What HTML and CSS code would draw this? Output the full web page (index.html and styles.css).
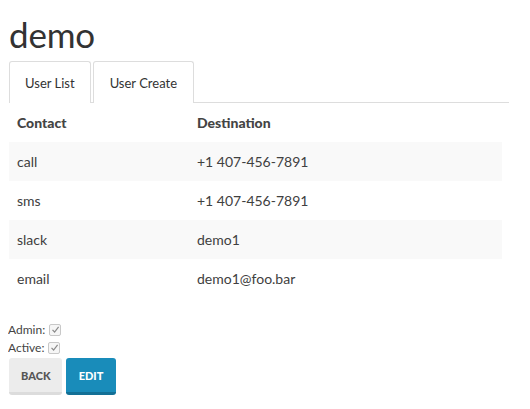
FILE: index.html
```html
<!DOCTYPE html>
<html>
<head>
<meta charset="utf-8">
<link rel="stylesheet" href="styles.css">
</head>
<body>
<h1 class="title">demo</h1>
<div class="tabs">
  <div class="tab">User List</div>
  <div class="tab">User Create</div>
</div>
<table class="contacts">
  <thead>
    <tr><th class="col1">Contact</th><th>Destination</th></tr>
  </thead>
  <tbody>
    <tr class="odd"><td>call</td><td>+1 407-456-7891</td></tr>
    <tr><td>sms</td><td>+1 407-456-7891</td></tr>
    <tr class="odd"><td>slack</td><td>demo1</td></tr>
    <tr><td>email</td><td>demo1@foo.bar</td></tr>
  </tbody>
</table>
<div class="flags">
  <div class="flag">Admin: <span class="check"><svg width="9" height="9" viewBox="0 0 9 9"><path d="M1.5 4.8 L3.6 7 L7.6 1.8" fill="none" stroke="#8a8a8a" stroke-width="1.2"/></svg></span></div>
  <div class="flag">Active: <span class="check"><svg width="9" height="9" viewBox="0 0 9 9"><path d="M1.5 4.8 L3.6 7 L7.6 1.8" fill="none" stroke="#8a8a8a" stroke-width="1.2"/></svg></span></div>
</div>
<div class="actions">
  <button class="btn btn-back">Back</button>
  <button class="btn btn-edit">Edit</button>
</div>
</body>
</html>
```

FILE: styles.css
```css
body {
  margin: 8px;
  font-family: Lato, "Liberation Sans", sans-serif;
  color: #444;
  background: #fff;
}
.title {
  margin: 4px 0 0 1px;
  font-family: Lato, sans-serif;
  font-weight: 400;
  font-size: 35px;
  line-height: 44px;
  color: #333;
  letter-spacing: -0.2px;
}
.tabs {
  display: flex;
  gap: 2px;
  margin: 5px 13px 0 1px;
  border-bottom: 1px solid #ddd;
  height: 41px;
}
.tab {
  display: flex;
  align-items: center;
  padding: 0 15px;
  border: 1px solid #ddd;
  border-bottom: none;
  border-radius: 3px 3px 0 0;
  font-size: 13px;
  color: #333;
  margin-bottom: -1px;
  background: #fff;
}
.tab + .tab { padding: 0 16px; }
.contacts {
  border-collapse: collapse;
  table-layout: fixed;
  margin-left: 1px;
  width: 493px;
  font-size: 14px;
  color: #404040;
}
.contacts th, .contacts td {
  height: 39px;
  padding: 0 8px;
  text-align: left;
}
.contacts th {
  font-weight: 900;
  color: #444;
}
.col1 { width: 164px; }
.contacts tr.odd { background: #f9f9f9; }
.flags {
  margin-top: 24px;
  font-size: 12px;
  color: #444;
}
.flag {
  display: flex;
  align-items: center;
  gap: 2px;
  height: 15px;
  margin-bottom: 3px;
}
.check {
  display: inline-flex;
  align-items: center;
  justify-content: center;
  width: 10px;
  height: 10px;
  border: 1px solid #c8c8c8;
  border-radius: 2px;
  background: #f6f6f6;
  margin-left: 2px;
}
.actions {
  display: flex;
  gap: 4px;
  margin: 2px 0 0 1px;
}
.btn {
  font-family: Lato, sans-serif;
  font-weight: 900;
  font-size: 11px;
  text-transform: uppercase;
  border: none;
  border-radius: 3px;
  height: 37px;
  padding: 0 12px;
  cursor: pointer;
}
.btn-back {
  background: #ececec;
  color: #555;
  border-bottom: 3px solid #dcdcdc;
  width: 53px;
}
.btn-edit {
  background: #198cba;
  color: #fff;
  border-bottom: 3px solid #137096;
  width: 50px;
}
```
